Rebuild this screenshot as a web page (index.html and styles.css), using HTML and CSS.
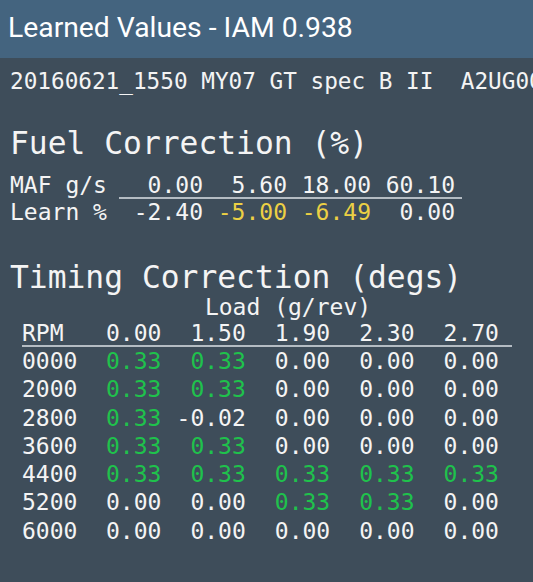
FILE: index.html
```html
<!DOCTYPE html>
<html>
<head>
<meta charset="utf-8">
<title>Learned Values</title>
<link rel="stylesheet" href="styles.css">
</head>
<body>
<header class="titlebar">Learned Values - IAM 0.938</header>
<main class="content">
  <div class="subtitle">20160621_1550 MY07 GT spec B II  A2UG000G</div>

  <h2 class="heading heading-fuel">Fuel Correction (%)</h2>
  <div class="fuel">
    <div class="frow fhead">
      <span class="lbl">MAF g/s</span>
      <span class="v ruled">0.00</span>
      <span class="v ruled">5.60</span>
      <span class="v ruled">18.00</span>
      <span class="v ruled">60.10</span>
      <span class="ruled"></span>
    </div>
    <div class="frow">
      <span class="lbl">Learn %</span>
      <span class="v">-2.40</span>
      <span class="v warn">-5.00</span>
      <span class="v warn">-6.49</span>
      <span class="v">0.00</span>
      <span></span>
    </div>
  </div>

  <h2 class="heading heading-timing">Timing Correction (degs)</h2>
  <div class="timing">
    <div class="trow tload"><span></span><span class="load">Load (g/rev)</span><span></span></div>
    <div class="trow thead">
      <span>RPM</span><span class="v">0.00</span><span class="v">1.50</span><span class="v">1.90</span><span class="v">2.30</span><span class="v">2.70</span><span></span>
    </div>
    <div class="trow"><span>0000</span><span class="v ok">0.33</span><span class="v ok">0.33</span><span class="v">0.00</span><span class="v">0.00</span><span class="v">0.00</span><span></span></div>
    <div class="trow"><span>2000</span><span class="v ok">0.33</span><span class="v ok">0.33</span><span class="v">0.00</span><span class="v">0.00</span><span class="v">0.00</span><span></span></div>
    <div class="trow"><span>2800</span><span class="v ok">0.33</span><span class="v">-0.02</span><span class="v">0.00</span><span class="v">0.00</span><span class="v">0.00</span><span></span></div>
    <div class="trow"><span>3600</span><span class="v ok">0.33</span><span class="v ok">0.33</span><span class="v">0.00</span><span class="v">0.00</span><span class="v">0.00</span><span></span></div>
    <div class="trow"><span>4400</span><span class="v ok">0.33</span><span class="v ok">0.33</span><span class="v ok">0.33</span><span class="v ok">0.33</span><span class="v ok">0.33</span><span></span></div>
    <div class="trow"><span>5200</span><span class="v">0.00</span><span class="v">0.00</span><span class="v ok">0.33</span><span class="v ok">0.33</span><span class="v">0.00</span><span></span></div>
    <div class="trow"><span>6000</span><span class="v">0.00</span><span class="v">0.00</span><span class="v">0.00</span><span class="v">0.00</span><span class="v">0.00</span><span></span></div>
  </div>
</main>
</body>
</html>
```

FILE: styles.css
```css
html, body {
  margin: 0;
  padding: 0;
  background: #3e4d5a;
  width: 533px;
  height: 582px;
  overflow: hidden;
}

.titlebar {
  height: 58px;
  line-height: 56px;
  padding-left: 8px;
  background: #44647f;
  color: #ffffff;
  font-family: Roboto, "Noto Sans", sans-serif;
  font-size: 28.3px;
  box-sizing: border-box;
}

.content {
  color: #f4f4f4;
  font-family: "DejaVu Sans Mono", "Liberation Mono", monospace;
  font-size: 23px;
}

.subtitle {
  margin-top: 9px;
  padding-left: 10px;
  font-size: 22.7px;
  line-height: 28px;
  white-space: pre;
  overflow: hidden;
}

.heading {
  margin: 0;
  font-weight: normal;
  font-size: 31.3px;
  padding-left: 10px;
  white-space: pre;
}

.heading-fuel {
  margin-top: 30px;
  line-height: 36px;
}

.fuel {
  margin-top: 13px;
  padding-left: 10px;
}

.frow {
  display: grid;
  grid-template-columns: 109px 84px 84px 84px 84px 7px;
  line-height: 26px;
  white-space: pre;
}

.fhead {
  line-height: 23px;
}

.ruled {
  border-bottom: 2px solid #b4bcc3;
}

.v {
  text-align: right;
}

.warn {
  color: #ecd044;
}

.ok {
  color: #1fc24c;
}

.heading-timing {
  margin-top: 37px;
  line-height: 31px;
}

.timing {
  margin-left: 22px;
  width: 490px;
}

.trow {
  display: grid;
  grid-template-columns: 55px repeat(5, 84.4px) 13px;
  line-height: 28.3px;
  white-space: pre;
}

.tload {
  grid-template-columns: 55px 422px 13px;
  line-height: 28px;
}

.load {
  text-align: center;
}

.thead {
  line-height: 24px;
  border-bottom: 2px solid #b4bcc3;
}
```
